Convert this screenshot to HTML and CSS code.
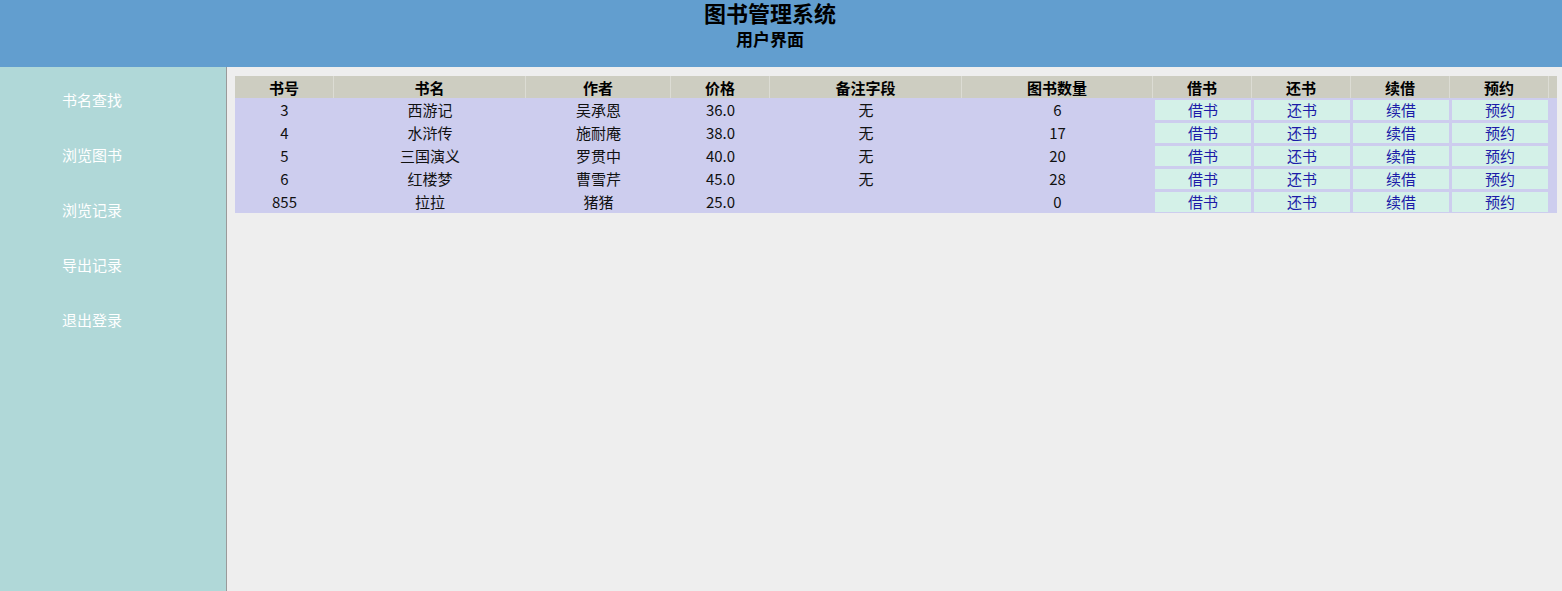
FILE: index.html
```html
<!DOCTYPE html>
<html lang="zh-CN">
<head>
<meta charset="utf-8">
<title>图书管理系统</title>
<link rel="stylesheet" href="styles.css">
</head>
<body>
<header class="top">
  <div class="title">图书管理系统</div>
  <div class="subtitle">用户界面</div>
</header>
<div class="wrap">
  <nav class="side">
    <a class="menu-item">书名查找</a>
    <a class="menu-item">浏览图书</a>
    <a class="menu-item">浏览记录</a>
    <a class="menu-item">导出记录</a>
    <a class="menu-item">退出登录</a>
  </nav>
  <main class="main">
    <table class="books">
      <colgroup>
        <col class="c99"><col class="c192"><col class="c145"><col class="c99"><col class="c192"><col class="c191">
        <col class="c99"><col class="c99"><col class="c99"><col class="c99"><col class="c8">
      </colgroup>
      <thead>
        <tr><th>书号</th><th>书名</th><th>作者</th><th>价格</th><th>备注字段</th><th>图书数量</th><th>借书</th><th>还书</th><th>续借</th><th>预约</th><th class="empty"></th></tr>
      </thead>
      <tbody>
        <tr><td>3</td><td>西游记</td><td>吴承恩</td><td>36.0</td><td>无</td><td>6</td><td class="act"><a>借书</a></td><td class="act"><a>还书</a></td><td class="act"><a>续借</a></td><td class="act"><a>预约</a></td><td></td></tr>
        <tr><td>4</td><td>水浒传</td><td>施耐庵</td><td>38.0</td><td>无</td><td>17</td><td class="act"><a>借书</a></td><td class="act"><a>还书</a></td><td class="act"><a>续借</a></td><td class="act"><a>预约</a></td><td></td></tr>
        <tr><td>5</td><td>三国演义</td><td>罗贯中</td><td>40.0</td><td>无</td><td>20</td><td class="act"><a>借书</a></td><td class="act"><a>还书</a></td><td class="act"><a>续借</a></td><td class="act"><a>预约</a></td><td></td></tr>
        <tr><td>6</td><td>红楼梦</td><td>曹雪芹</td><td>45.0</td><td>无</td><td>28</td><td class="act"><a>借书</a></td><td class="act"><a>还书</a></td><td class="act"><a>续借</a></td><td class="act"><a>预约</a></td><td></td></tr>
        <tr><td>855</td><td>拉拉</td><td>猪猪</td><td>25.0</td><td></td><td>0</td><td class="act"><a>借书</a></td><td class="act"><a>还书</a></td><td class="act"><a>续借</a></td><td class="act"><a>预约</a></td><td></td></tr>
      </tbody>
    </table>
  </main>
</div>
</body>
</html>
```
FILE: styles.css
```css
html, body {
  margin: 0;
  padding: 0;
  height: 100%;
}
body {
  font-family: "Noto Sans CJK SC", "Liberation Sans", sans-serif;
  font-size: 15px;
  color: #111;
  background: #eeeeee;
  overflow: hidden;
}
.top {
  height: 67px;
  background: #629ecf;
  display: flex;
  flex-direction: column;
  align-items: center;
  padding: 0 22px 0 0;
  box-sizing: border-box;
}
.title {
  font-size: 22px;
  font-weight: bold;
  line-height: 24px;
  color: #000;
}
.subtitle {
  font-size: 17px;
  font-weight: bold;
  line-height: 28px;
  margin-top: 1px;
  color: #000;
}
.wrap {
  display: flex;
  height: 524px;
}
.side {
  width: 226px;
  flex: none;
  background: #b0d8d8;
  border-right: 1px solid #9a9a9a;
  padding-top: 5px;
  display: flex;
  flex-direction: column;
}
.menu-item {
  display: block;
  height: 55px;
  line-height: 55px;
  padding-left: 62px;
  color: #ffffff;
  font-size: 15px;
}
.main {
  flex: 1;
  background: #eeeeee;
  padding: 9px 0 0 8px;
}
.books {
  border-collapse: separate;
  border-spacing: 0;
  table-layout: fixed;
  width: 1322px;
  background: #cdcdee;
}
.c99 { width: 99px; }
.c192 { width: 192px; }
.c145 { width: 145px; }
.c191 { width: 191px; }
.c8 { width: 8px; }
.books thead tr {
  height: 22px;
}
.books th {
  padding: 0;
  background: #cdcdc1;
  border-right: 1px solid #dcdcd4;
  font-weight: bold;
  font-size: 15px;
  line-height: 21px;
  color: #000;
}
.books th.empty {
  border-right: none;
}
.books tbody tr {
  height: 23px;
}
.books td {
  padding: 0;
  text-align: center;
  line-height: 22px;
  color: #111;
}
.books td.act {
  padding: 2px 1px 1px 2px;
}
.books td.act a {
  display: block;
  height: 20px;
  line-height: 20px;
  background: #d4f1e8;
  color: #1c1ca8;
}
```
